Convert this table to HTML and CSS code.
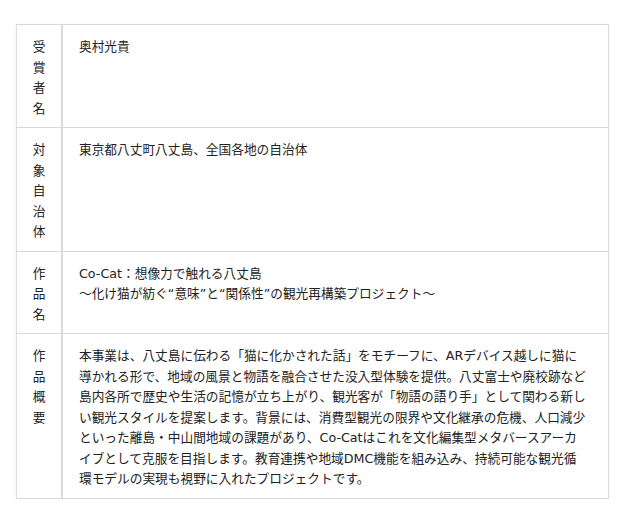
FILE: index.html
```html
<!DOCTYPE html>
<html lang="ja">

<head>
    <meta charset="UTF-8">
    <title>受賞者情報</title>
    <link rel="stylesheet" href="styles.css">
</head>

<body>
    <table class="info-table">
        <tr>
            <th>受賞者名</th>
            <td>奥村光貴</td>
        </tr>
        <tr>
            <th>対象自治体</th>
            <td>東京都八丈町八丈島、全国各地の自治体</td>
        </tr>
        <tr>
            <th>作品名</th>
            <td>Co-Cat：想像力で触れる八丈島<br>～化け猫が紡ぐ“意味”と“関係性”の観光再構築プロジェクト～</td>
        </tr>
        <tr>
            <th>作品概要</th>
            <td>本事業は、八丈島に伝わる「猫に化かされた話」をモチーフに、ARデバイス越しに猫に<br>導かれる形で、地域の風景と物語を融合させた没入型体験を提供。八丈富士や廃校跡など<br>島内各所で歴史や生活の記憶が立ち上がり、観光客が「物語の語り手」として関わる新し<br>い観光スタイルを提案します。背景には、消費型観光の限界や文化継承の危機、人口減少<br>といった離島・中山間地域の課題があり、Co-Catはこれを文化編集型メタバースアーカ<br>イブとして克服を目指します。教育連携や地域DMC機能を組み込み、持続可能な観光循<br>環モデルの実現も視野に入れたプロジェクトです。</td>
        </tr>
    </table>
</body>

</html>
```

FILE: styles.css
```css
body {
    margin: 0;
    padding: 24px 0 0 16px;
    background-color: #ffffff;
    font-family: "DejaVu Sans", "Noto Sans CJK JP", sans-serif;
    color: #222222;
}

.info-table {
    width: 593px;
    border-collapse: collapse;
    border: 1px solid #dedede;
    box-shadow: 0 1px 4px rgba(0, 0, 0, 0.06);
    font-size: 12.7px;
    line-height: 20.5px;
}

.info-table th,
.info-table td {
    border-top: 1px solid #d8d8d8;
    border-bottom: 1px solid #d8d8d8;
    padding: 12px 15px 8px 16px;
    vertical-align: top;
    text-align: left;
}

.info-table th {
    width: 14px;
    padding-left: 15px;
    font-weight: normal;
    text-align: center;
    border-right: 2px solid #dadada;
    word-break: break-all;
}

.info-table td {
    white-space: nowrap;
}
```
